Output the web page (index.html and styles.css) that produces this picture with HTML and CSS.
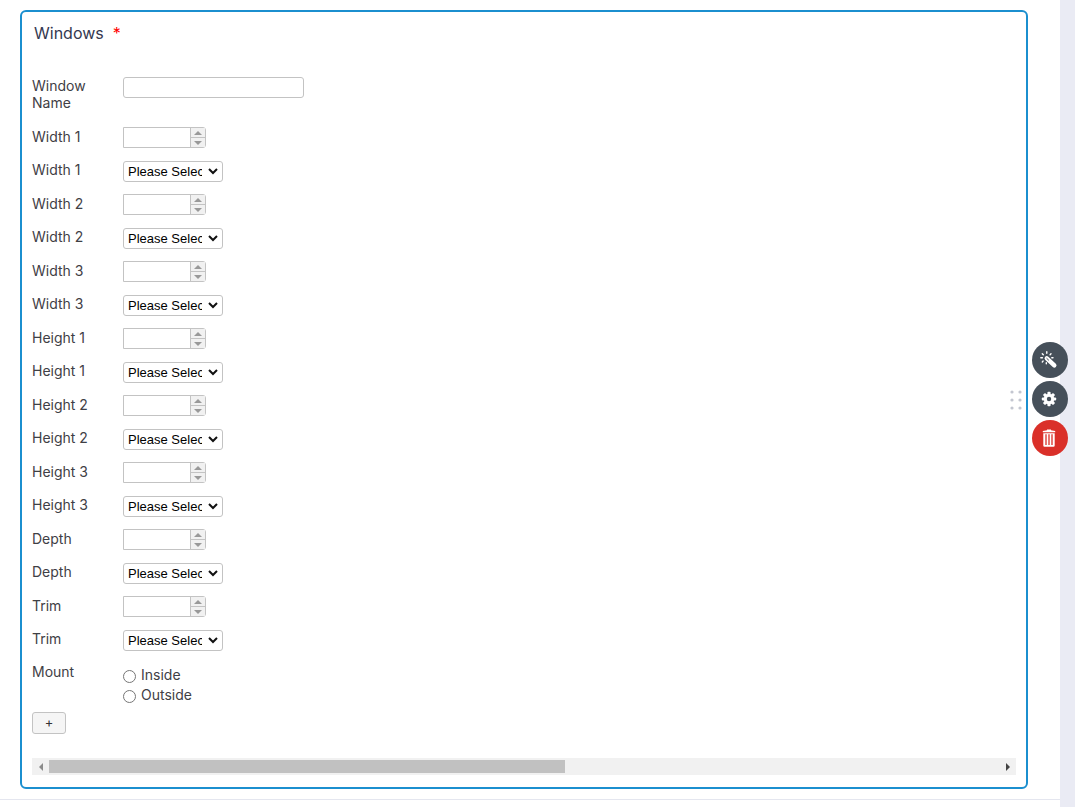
FILE: index.html
```
<!DOCTYPE html>
<html lang="en">
<head>
<meta charset="utf-8">
<title>Windows</title>
<link rel="stylesheet" href="styles.css">
</head>
<body>
<main class="sheet">
  <section class="question">
    <h1 class="title">Windows <span class="required">*</span></h1>
    <form class="fields" id="fields">
      <div class="row row-name"><label class="label" for="name">Window Name</label><input class="text" id="name" type="text"></div>
    </form>
    <button class="add" type="button">+</button>
    <div class="scrollbar">
      <button class="scroll-button" type="button" aria-label="Scroll left"><svg width="4" height="8" viewBox="0 0 4 8"><path d="M4 0v8L0 4z" fill="#8b8b8b"/></svg></button>
      <div class="track"><div class="thumb"></div></div>
      <button class="scroll-button" type="button" aria-label="Scroll right"><svg width="4" height="8" viewBox="0 0 4 8"><path d="M0 0v8l4-4z" fill="#444"/></svg></button>
    </div>
    <svg class="grip" width="12" height="20" viewBox="0 0 12 20" fill="#c3c6d0"><circle cx="2" cy="2" r="1.6"/><circle cx="10" cy="2" r="1.6"/><circle cx="2" cy="10" r="1.6"/><circle cx="10" cy="10" r="1.6"/><circle cx="2" cy="18" r="1.6"/><circle cx="10" cy="18" r="1.6"/></svg>
    <div class="actions">
      <button class="action" type="button" aria-label="Wizard"><svg width="18" height="18" viewBox="0 0 18 18" fill="none" stroke="#fff" stroke-linecap="round"><path d="M6.8 7.3l7.5 7.1" stroke-width="4.4"/><path d="M6.8 7.4l1.8 1.7" stroke="#46505a" stroke-width="1"/><path d="M.8 6.7h1.6M2.3 2.7l1 1M6.8.8v1.4M11 2.8l-.9.9M13 6.7h-1.2M2.3 10.9l.8-.8M6.3 12.7v-1" stroke-width="1.4"/></svg></button>
      <button class="action" type="button" aria-label="Settings"><svg width="16" height="16" viewBox="0 0 16 16"><g fill="#fff"><circle cx="8" cy="8" r="5.2"/><rect x="6.4" y=".8" width="3.2" height="14.4" rx="1"/><rect x=".8" y="6.4" width="14.4" height="3.2" rx="1"/><rect x="6.4" y=".8" width="3.2" height="14.4" rx="1" transform="rotate(45 8 8)"/><rect x="6.4" y=".8" width="3.2" height="14.4" rx="1" transform="rotate(-45 8 8)"/></g><circle cx="8" cy="8" r="2.2" fill="#46505a"/></svg></button>
      <button class="action action-delete" type="button" aria-label="Delete"><svg width="14" height="18" viewBox="0 0 14 18"><path d="M.8 3.2V2L5 1.3V.4h4v.9l4.2.7v1.2zM1.3 4.3h11.4v12.2q0 1.2-1.2 1.2h-9q-1.2 0-1.2-1.2z" fill="#fff"/><path d="M4 5.3v10.6M7 5.3v10.6M10 5.3v10.6" stroke="#da3029" stroke-width="1.3"/></svg></button>
    </div>
  </section>
</main>
<script src="fields.js"></script>
</body>
</html>
```
FILE: styles.css
```
* { box-sizing: border-box; }
body {
  margin: 0;
  min-height: 100vh;
  background: #eaebf4;
  font-family: Inter, "Liberation Sans", sans-serif;
  color: #3f4045;
}
.sheet {
  min-height: 800px;
  margin-right: 15px;
  padding: 10px 32px 10px 20px;
  background: #fff;
  border-bottom: 1px solid #e4e6ef;
  box-shadow: 0 8px 0 #fff;
}
.question {
  position: relative;
  padding: 10px;
  border: 2px solid #1b8fcf;
  border-radius: 6px;
}
.title {
  display: flex;
  gap: 9px;
  margin: 0;
  padding: 0 2px;
  color: #343850;
  font-size: 16px;
  font-weight: 400;
  line-height: 22px;
}
.required { color: #f00; }
.fields { padding-top: 33px; }
.row {
  display: grid;
  grid-template-columns: 60px 1fr;
  column-gap: 31px;
  align-items: start;
  height: 33px;
  font-size: 14px;
}
.row-number { height: 34px; }
.row-name { height: 50px; }
.label { line-height: 17px; }
.row-number .label { padding-top: 1px; }
.text, .number, .select {
  height: 21px;
  border: 1px solid #c3c3c3;
  background: #fff;
}
.text { width: 181px; border-radius: 3px; }
.number {
  display: flex;
  width: 83px;
  border-radius: 0 3px 3px 0;
}
.number-input {
  flex: 1;
  min-width: 0;
  border: 0;
  padding: 0 4px;
  background: none;
  appearance: textfield;
}
.number-input::-webkit-inner-spin-button { appearance: none; }
.stepper {
  display: flex;
  flex-direction: column;
  width: 15px;
  border-left: 1px solid #c3c3c3;
}
.step {
  display: flex;
  flex: 1;
  align-items: center;
  justify-content: center;
  padding: 0;
  border: 0;
  background: #f1f1f1;
}
.step + .step { border-top: 1px solid #c3c3c3; }
.picker { position: relative; width: 100px; }
.select {
  display: block;
  width: 100%;
  padding: 0 20px 0 4px;
  border-radius: 3px;
  color: #000;
  font: 13px "Liberation Sans", Arial, sans-serif;
  text-overflow: clip;
  appearance: none;
}
.chevron {
  position: absolute;
  top: 7px;
  right: 5px;
  pointer-events: none;
}
.row-mount { height: 48px; }
.choices { padding-top: 3px; }
.choice {
  display: flex;
  align-items: flex-start;
  gap: 5px;
  height: 20px;
  line-height: 18px;
}
.radio { width: 13px; height: 13px; margin: 4px 0 0; }
.add {
  display: block;
  width: 34px;
  height: 22px;
  margin-top: 1px;
  padding: 0 0 2px;
  border: 1px solid #c3c3c3;
  border-radius: 3px;
  background: #f5f5f5;
  color: #333;
  font: 13px Inter, sans-serif;
}
.scrollbar {
  display: flex;
  height: 17px;
  margin-top: 24px;
  margin-bottom: 2px;
  background: #f1f1f1;
}
.scroll-button {
  display: flex;
  align-items: center;
  justify-content: center;
  width: 17px;
  padding: 0;
  border: 0;
  background: none;
}
.track { flex: 1; padding: 2px 0; }
.thumb { width: 54.3%; height: 13px; background: #c1c1c1; }
.grip { position: absolute; top: 378px; right: 4px; }
.actions {
  position: absolute;
  top: 330px;
  right: -42px;
  display: grid;
  gap: 3px;
}
.action {
  display: flex;
  align-items: center;
  justify-content: center;
  width: 36px;
  height: 36px;
  padding: 0 2px 0 0;
  border: 0;
  border-radius: 50%;
  background: #46505a;
}
.action-delete { background: #da3029; }
```
FILE: fields.js
```
const form = document.getElementById('fields');
const names = ['Width 1', 'Width 2', 'Width 3', 'Height 1', 'Height 2', 'Height 3', 'Depth', 'Trim'];
let html = '';
names.forEach((name, i) => {
  html += `
    <div class="row row-number">
      <label class="label" for="number-${i}">${name}</label>
      <div class="number">
        <input class="number-input" id="number-${i}" type="number">
        <div class="stepper">
          <button class="step" type="button" aria-label="Increase ${name}"><svg width="8" height="4" viewBox="0 0 8 4"><path d="M4 0l4 4H0z" fill="#999"/></svg></button>
          <button class="step" type="button" aria-label="Decrease ${name}"><svg width="8" height="4" viewBox="0 0 8 4"><path d="M0 0h8L4 4z" fill="#999"/></svg></button>
        </div>
      </div>
    </div>
    <div class="row">
      <label class="label" for="select-${i}">${name}</label>
      <div class="picker">
        <select class="select" id="select-${i}"><option>Please Select</option></select>
        <svg class="chevron" width="10" height="7" viewBox="0 0 10 7" fill="none"><path d="M1 1l4 4 4-4" stroke="#111" stroke-width="2"/></svg>
      </div>
    </div>`;
});
html += `
  <div class="row row-mount" role="radiogroup" aria-labelledby="mount">
    <span class="label" id="mount">Mount</span>
    <div class="choices">
      <label class="choice"><input class="radio" type="radio" name="mount">Inside</label>
      <label class="choice"><input class="radio" type="radio" name="mount">Outside</label>
    </div>
  </div>`;
form.insertAdjacentHTML('beforeend', html);
```
